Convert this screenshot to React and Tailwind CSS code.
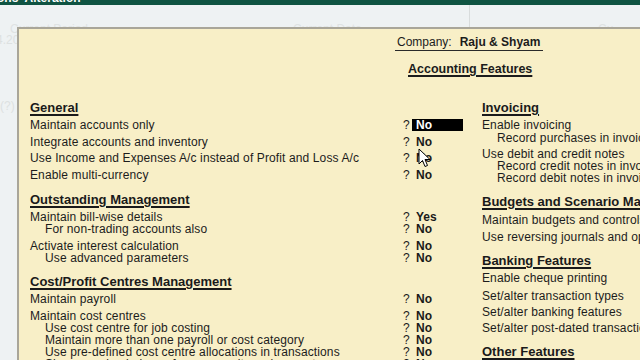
import React from "react";

const leftRows = [
  { t: "h", text: "General", mt: "mt-0" },
  { t: "r", text: "Maintain accounts only", v: "No", sel: true, mt: "mt-[4px]" },
  { t: "r", text: "Integrate accounts and inventory", v: "No", mt: "mt-[5px]" },
  { t: "r", text: "Use Income and Expenses A/c instead of Profit and Loss A/c", v: "No", mt: "mt-[4px]" },
  { t: "r", text: "Enable multi-currency", v: "No", mt: "mt-[5px]" },
  { t: "h", text: "Outstanding Management", mt: "mt-[12px]" },
  { t: "r", text: "Maintain bill-wise details", v: "Yes", mt: "mt-[4px]" },
  { t: "s", text: "For non-trading accounts also", v: "No", mt: "mt-0" },
  { t: "r", text: "Activate interest calculation", v: "No", mt: "mt-[5px]" },
  { t: "s", text: "Use advanced parameters", v: "No", mt: "mt-0" },
  { t: "h", text: "Cost/Profit Centres Management", mt: "mt-[11px]" },
  { t: "r", text: "Maintain payroll", v: "No", mt: "mt-[4px]" },
  { t: "r", text: "Maintain cost centres", v: "No", mt: "mt-[5px]" },
  { t: "s", text: "Use cost centre for job costing", v: "No", mt: "mt-0" },
  { t: "s", text: "Maintain more than one payroll or cost category", v: "No", mt: "mt-0" },
  { t: "s", text: "Use pre-defined cost centre allocations in transactions", v: "No", mt: "mt-0" },
  { t: "s", text: "Show opening balance for revenue items in reports", v: "No", mt: "mt-0" },
];

const rightRows = [
  { t: "h", text: "Invoicing", mt: "mt-0" },
  { t: "r", text: "Enable invoicing", mt: "mt-[4px]" },
  { t: "s", text: "Record purchases in invoice mode", mt: "mt-[1px]" },
  { t: "r", text: "Use debit and credit notes", mt: "mt-[4px]" },
  { t: "s", text: "Record credit notes in invoice mode", mt: "mt-0" },
  { t: "s", text: "Record debit notes in invoice mode", mt: "mt-0" },
  { t: "h", text: "Budgets and Scenario Management", mt: "mt-[11px]" },
  { t: "r", text: "Maintain budgets and controls", mt: "mt-[5px]" },
  { t: "r", text: "Use reversing journals and optional vouchers", mt: "mt-[5px]" },
  { t: "h", text: "Banking Features", mt: "mt-[11px]" },
  { t: "r", text: "Enable cheque printing", mt: "mt-[4px]" },
  { t: "r", text: "Set/alter transaction types", mt: "mt-[6px]" },
  { t: "r", text: "Set/alter banking features", mt: "mt-[4px]" },
  { t: "r", text: "Set/alter post-dated transactions", mt: "mt-[4px]" },
  { t: "h", text: "Other Features", mt: "mt-[11px]" },
];

function Heading({ text, mt }) {
  return (
    <div className={`${mt} h-[14px] leading-[14px] text-[13px] font-bold tracking-normal text-[#1a1a1a] whitespace-nowrap`}>
      <span className="underline decoration-[1.5px] underline-offset-[2px]">{text}</span>
    </div>
  );
}

function LeftRow({ r }) {
  if (r.t === "h") return <Heading text={r.text} mt={r.mt} />;
  return (
    <div className={`${r.mt} flex h-[12px] leading-[12px] items-center whitespace-nowrap`}>
      <span className={`w-[373px] tracking-[0.12px] ${r.t === "s" ? "pl-[15px]" : ""}`}>{r.text}</span>
      <span className="w-[9px]">?</span>
      <span
        className={`w-[51px] h-[12px] pl-[4px] font-bold ${
          r.sel ? "bg-black text-white" : "text-[#1a1a1a]"
        }`}
      >
        {r.v}
      </span>
    </div>
  );
}

function RightRow({ r }) {
  if (r.t === "h") return <Heading text={r.text} mt={r.mt} />;
  return (
    <div
      className={`${r.mt} h-[12px] leading-[12px] tracking-[0.12px] whitespace-nowrap ${r.t === "s" ? "pl-[15px]" : ""}`}
    >
      {r.text}
    </div>
  );
}

export default function App() {
  return (
    <div className="relative w-[640px] h-[360px] overflow-hidden bg-[#eef2f3] font-['Liberation_Sans',Arial,sans-serif]">
      {/* top title bar */}
      <div className="h-[5px] bg-[#0f5442] overflow-hidden">
        <div className="-mt-[9px] text-[12px] leading-[14px] font-bold text-white whitespace-nowrap">
          <span className="-ml-[3px] inline-block">ons&nbsp; Alteration</span>
        </div>
      </div>
      {/* background area (faint) */}
      <div className="flex h-[22px]">
        <div className="w-[470px] border-r border-[#d8dcdc] text-[12px] text-[#dfe3e3] pt-[15px] pl-[10px] whitespace-nowrap">
          Current Period<span className="ml-[205px]">Current Date</span>
        </div>
        <div className="flex-1 text-[12px] text-[#dfe3e3] pt-[15px] pl-[128px]">Cu</div>
      </div>
      <div className="text-[12px] text-[#dde1e1] leading-[14px] pt-[6px] whitespace-nowrap">
        <div className="-ml-[4px]">4.20</div>
        <div className="mt-[52px]">(?)</div>
      </div>

      {/* dialog panel */}
      <div className="absolute left-[17px] top-[27px] right-0 bottom-0 bg-[#f8efc7] border-l-2 border-t-2 border-[#a9a699] overflow-hidden text-[12px] text-[#1c1c1c]">
        <div className="pl-[11px] pt-[4px]">
          <div className="ml-[365px] inline-flex items-center h-[16px] leading-[14px] border-b-[1.5px] border-[#2a2a2a] pl-[2px] pr-[3px] whitespace-nowrap">
            <span>Company:</span>
            <span className="ml-[8px] font-bold">Raju &amp; Shyam</span>
          </div>
          <div className="mt-[11px] ml-[378px] h-[14px] leading-[14px] text-[12.5px] font-bold whitespace-nowrap">
            <span className="underline decoration-[1.5px] underline-offset-[2px]">Accounting Features</span>
          </div>
          <div className="mt-[25px] flex">
            <div className="w-[452px] shrink-0 flex flex-col">
              {leftRows.map((r, i) => (
                <LeftRow key={i} r={r} />
              ))}
            </div>
            <div className="flex flex-col">
              {rightRows.map((r, i) => (
                <RightRow key={i} r={r} />
              ))}
            </div>
          </div>
        </div>
      </div>

      {/* mouse cursor */}
      <svg
        className="absolute left-[418px] top-[148px]"
        width="13"
        height="20"
        viewBox="0 0 13 20"
      >
        <path
          d="M1 1 L1 16 L4.5 12.5 L7 18.5 L9.5 17.5 L7 11.5 L12 11.5 Z"
          fill="white"
          stroke="black"
          strokeWidth="1"
          strokeLinejoin="round"
        />
      </svg>
    </div>
  );
}
